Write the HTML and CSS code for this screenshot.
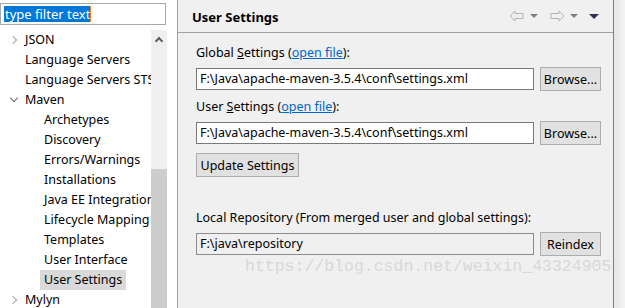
FILE: index.html
```html
<!DOCTYPE html>
<html lang="en">
<head>
  <meta charset="UTF-8" />
  <title>Preferences | User Settings</title>
  <link rel="stylesheet" href="styles.css">
</head>
<body>
  <!-- Preference tree -->
  <div class="sidebar">
    <div class="filter">
      <span class="filter-text">type filter text</span><span class="caret"></span>
    </div>
    <div class="tree-wrap">
      <ul class="tree">
        <li class="node"><span class="twisty"></span>JSON</li>
        <li class="node leaf">Language Servers</li>
        <li class="node leaf">Language Servers STS</li>
        <li class="node"><span class="twisty open"></span>Maven</li>
        <li class="child">Archetypes</li>
        <li class="child">Discovery</li>
        <li class="child">Errors/Warnings</li>
        <li class="child">Installations</li>
        <li class="child">Java EE Integration</li>
        <li class="child">Lifecycle Mapping</li>
        <li class="child">Templates</li>
        <li class="child">User Interface</li>
        <li class="child"><span class="selected">User Settings</span></li>
        <li class="node"><span class="twisty"></span>Mylyn</li>
      </ul>
      <div class="scrollbar">
        <span class="scroll-up"></span>
        <div class="thumb"></div>
      </div>
    </div>
  </div>

  <!-- Settings page -->
  <div class="page">
    <div class="page-header">
      <h1>User Settings</h1>
      <div class="nav">
        <svg width="16" height="12" viewBox="0 0 16 12"><path d="M1 6 L6 1 L6 3.5 L14 3.5 L14 8.5 L6 8.5 L6 11 Z" fill="none" stroke="#b4b4b4" stroke-width="1"/></svg>
        <span class="drop"></span>
        <svg width="16" height="12" viewBox="0 0 16 12"><path d="M15 6 L10 1 L10 3.5 L2 3.5 L2 8.5 L10 8.5 L10 11 Z" fill="none" stroke="#b4b4b4" stroke-width="1"/></svg>
        <span class="drop"></span>
        <span class="menu"></span>
      </div>
    </div>

    <div class="page-body">
      <div class="label">Global <u>S</u>ettings (<a href="#">open file</a>):</div>
      <div class="row">
        <div class="field">F:\Java\apache-maven-3.5.4\conf\settings.xml</div>
        <button class="btn">Browse...</button>
      </div>

      <div class="label">User <u>S</u>ettings (<a href="#">open file</a>):</div>
      <div class="row">
        <div class="field">F:\Java\apache-maven-3.5.4\conf\settings.xml</div>
        <button class="btn">Browse...</button>
      </div>
      <button class="btn update">Update Settings</button>

      <div class="label repo-label">Local Repository (From merged user and global settings):</div>
      <div class="row">
        <div class="field readonly">F:\java\repository</div>
        <button class="btn">Reindex</button>
      </div>

      <div class="watermark">https://blog.csdn.net/weixin_43324905</div>
    </div>
  </div>

  <div class="edge"></div>
</body>
</html>
```

FILE: styles.css
```css
* {
  margin: 0;
  padding: 0;
  box-sizing: border-box;
}

body {
  font-family: 'Noto Sans', sans-serif;
  font-size: 12.5px;
  color: #000;
  width: 625px;
  height: 308px;
  display: flex;
  overflow: hidden;
  background: #fff;
}

/* left tree */
.sidebar {
  width: 178px;
  flex: none;
  background: #fff;
  border-right: 1px solid #a0a0a0;
  display: flex;
  flex-direction: column;
}

.filter {
  margin: 3px 11px 0 0;
  height: 22px;
  border: 1px solid #a9a9a9;
  padding: 2px 3px;
  display: flex;
  align-items: center;
}

.filter-text {
  background: #0078d7;
  color: #fff;
  font-size: 13px;
  line-height: 16px;
  padding: 0 0 0 1px;
}

.caret {
  width: 1px;
  height: 16px;
  background: #f08020;
}

.tree-wrap {
  flex: 1;
  display: flex;
  margin-top: 5px;
}

.tree {
  list-style: none;
  width: 151px;
  overflow: hidden;
  white-space: nowrap;
}

.tree li {
  height: 20px;
  line-height: 20px;
}

.node {
  padding-left: 8px;
  display: flex;
  align-items: center;
}

.node.leaf {
  padding-left: 25px;
}

.twisty {
  width: 17px;
  height: 20px;
  position: relative;
  flex: none;
}

/* chevron drawn with two borders */
.twisty::before {
  content: '';
  position: absolute;
  left: 2px;
  top: 7px;
  width: 5px;
  height: 5px;
  border-right: 1.5px solid #a6a6a6;
  border-bottom: 1.5px solid #a6a6a6;
  transform: rotate(-45deg);
}

.twisty.open::before {
  left: 3px;
  top: 5px;
  border-color: #6e6e6e;
  transform: rotate(45deg);
}

.child {
  padding-left: 44px;
}

.selected {
  display: inline-block;
  background: #d9d9d9;
  padding: 0 4px;
  margin-left: -4px;
}

.scrollbar {
  width: 16px;
  background: #f0f0f0;
  display: flex;
  flex-direction: column;
  align-items: center;
}

.scroll-up {
  margin-top: 8px;
  width: 6px;
  height: 6px;
  border-left: 2px solid #606060;
  border-top: 2px solid #606060;
  transform: rotate(45deg);
}

.thumb {
  margin-top: 125px;
  width: 16px;
  flex: 1;
  background: #cdcdcd;
}

/* right page */
.page {
  width: 436px;
  flex: none;
  background: #f0f0f0;
  border-right: 1px solid #3c8ee0;
  display: flex;
  flex-direction: column;
}

.page-header {
  height: 33px;
  border-bottom: 1px solid #a0a0a0;
  display: flex;
  align-items: center;
  justify-content: space-between;
  padding: 0 14px 0 14px;
}

.page-header h1 {
  font-size: 13px;
  font-weight: bold;
  padding-top: 1px;
}

.nav {
  display: flex;
  align-items: center;
  gap: 5px;
}

.drop {
  width: 0;
  height: 0;
  border-left: 4px solid transparent;
  border-right: 4px solid transparent;
  border-top: 4px solid #808080;
  margin-right: 6px;
}

.menu {
  width: 0;
  height: 0;
  border-left: 5px solid transparent;
  border-right: 5px solid transparent;
  border-top: 5px solid #3a2a50;
}

.page-body {
  padding: 10px 12px 0 18px;
  display: flex;
  flex-direction: column;
  position: relative;
  flex: 1;
}

.label {
  line-height: 18px;
  padding-top: 1px;
  margin-bottom: 5px;
}

.label a {
  color: #0066cc;
}

.row {
  display: flex;
  gap: 6px;
  align-items: center;
  margin-bottom: 6px;
}

.field {
  width: 338px;
  height: 22px;
  border: 1px solid #7a7a7a;
  background: #fff;
  line-height: 20px;
  padding-left: 3px;
  white-space: nowrap;
  overflow: hidden;
}

.field.readonly {
  background: #f0f0f0;
  border-color: #8c8c8c;
}

.btn {
  font-family: 'Noto Sans', sans-serif;
  font-size: 12.5px;
  height: 24px;
  width: 61px;
  background: #e1e1e1;
  border: 1px solid #adadad;
  color: #000;
}

.btn.update {
  width: 103px;
  align-self: flex-start;
  margin-top: 2px;
}

.repo-label {
  margin-top: 31px;
}

.watermark {
  position: absolute;
  left: 67px;
  top: 224px;
  font-family: 'Liberation Mono', monospace;
  font-size: 16.5px;
  color: #d8d8d8;
  white-space: nowrap;
}

.edge {
  flex: 1;
  background: linear-gradient(to right, #e6e6e6, #f4f4f4);
}
```
